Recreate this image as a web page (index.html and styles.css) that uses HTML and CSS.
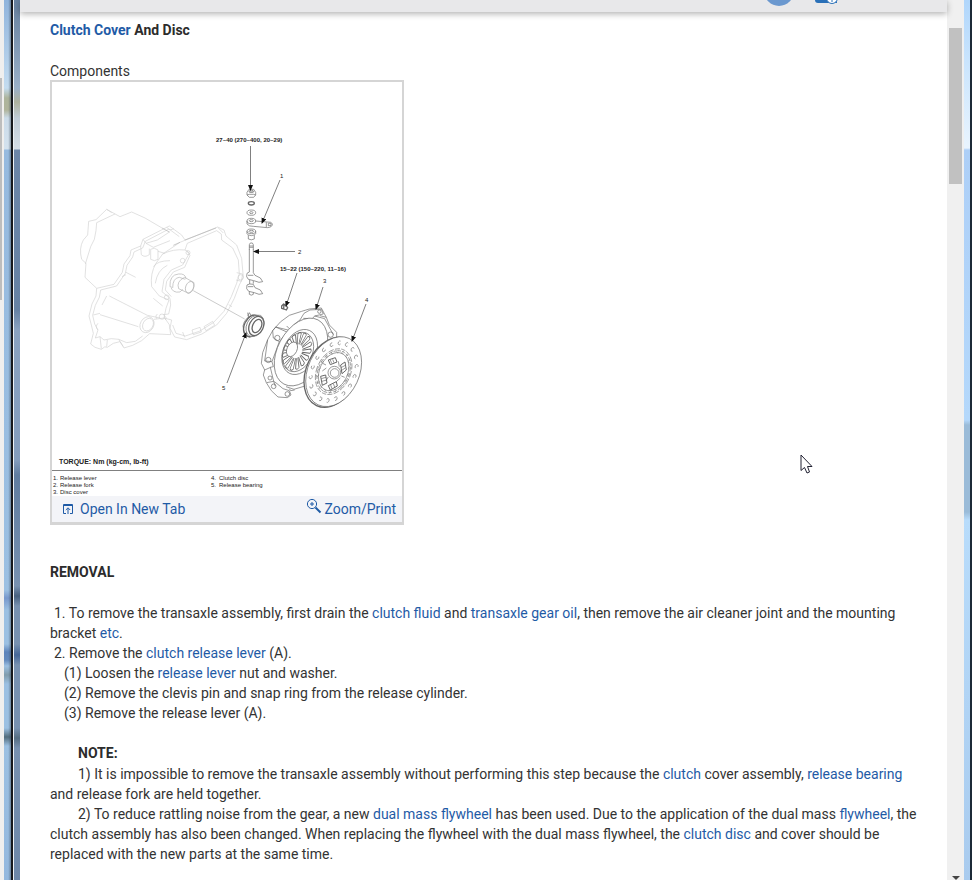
FILE: index.html
```html
<!DOCTYPE html>
<html lang="en">

<head>
    <meta charset="UTF-8">
    <meta name="viewport" content="width=device-width, initial-scale=1.0">
    <title>Clutch Cover And Disc</title>
    <link rel="stylesheet" href="styles.css">
</head>

<body>
    <div class="window">
        <div class="edge-left">
            <div class="back-window"><div class="back-thumb"></div></div>
            <div class="glass"></div>
            <div class="line-dark"></div>
            <div class="line-light"></div>
            <div class="glass-dark"></div>
        </div>

        <div class="page">
            <header class="topbar">
                <svg class="topbar-icons" viewBox="0 0 80 12" aria-hidden="true">
                    <circle cx="13" cy="-9" r="15" fill="#6b98cf" />
                    <path d="M49 0h22v3H52q-3 0-3-3z" fill="#2a70b8" />
                    <circle cx="66" cy="-2" r="5.500" fill="#fff" stroke="#2a70b8" />
                    <path d="M66 0v2" stroke="#2a70b8" />
                </svg>
            </header>

            <main class="content">
                <h1><a href="#clutch-cover">Clutch Cover</a> And Disc</h1>
                <p class="subtitle">Components</p>

                <figure class="diagram">
                    <svg class="drawing" viewBox="52 82 350 414" role="img" aria-label="Clutch cover and disc components">
                        <defs>
                            <marker id="arrow" markerWidth="7" markerHeight="6" refX="5" refY="2.500" orient="auto" markerUnits="userSpaceOnUse">
                                <path d="M0 0l6 2.500l-6 2.500z" fill="#111" stroke="none" />
                            </marker>
                            <path id="rivet" d="M5-96a6 6 0 1 0 2 9" />
                            <path id="finger" d="M-3-22L-7-56q7-8 14 0L3-22" />
                            <g id="fingers">
                                <use href="#finger" />
                                <use href="#finger" transform="rotate(24)" />
                                <use href="#finger" transform="rotate(48)" />
                                <use href="#finger" transform="rotate(72)" />
                                <use href="#finger" transform="rotate(96)" />
                                <use href="#finger" transform="rotate(120)" />
                                <use href="#finger" transform="rotate(144)" />
                                <use href="#finger" transform="rotate(168)" />
                                <use href="#finger" transform="rotate(192)" />
                                <use href="#finger" transform="rotate(216)" />
                                <use href="#finger" transform="rotate(240)" />
                                <use href="#finger" transform="rotate(264)" />
                                <use href="#finger" transform="rotate(288)" />
                                <use href="#finger" transform="rotate(312)" />
                                <use href="#finger" transform="rotate(336)" />
                            </g>
                            <g id="rivets">
                                <use href="#rivet" />
                                <use href="#rivet" transform="rotate(20)" />
                                <use href="#rivet" transform="rotate(40)" />
                                <use href="#rivet" transform="rotate(60)" />
                                <use href="#rivet" transform="rotate(80)" />
                                <use href="#rivet" transform="rotate(100)" />
                                <use href="#rivet" transform="rotate(120)" />
                                <use href="#rivet" transform="rotate(140)" />
                                <use href="#rivet" transform="rotate(160)" />
                                <use href="#rivet" transform="rotate(180)" />
                                <use href="#rivet" transform="rotate(200)" />
                                <use href="#rivet" transform="rotate(220)" />
                                <use href="#rivet" transform="rotate(240)" />
                                <use href="#rivet" transform="rotate(260)" />
                                <use href="#rivet" transform="rotate(280)" />
                                <use href="#rivet" transform="rotate(300)" />
                                <use href="#rivet" transform="rotate(320)" />
                                <use href="#rivet" transform="rotate(340)" />
                            </g>
                        </defs>

                        <!-- transaxle housing -->
                        <g class="faint" transform="translate(70 190) scale(.3333)">
                            <path d="M80 295L45 262L48 220L35 208Q26 175 40 150L53 135L56 94L78 89L110 58L150 80L185 66L225 84L276 114" />
                            <path d="M80 98L135 72M80 98L78 122Q76 150 62 170L46 222M110 58L125 68" />
                            <path d="M80 295L132 283L157 247L162 222L180 197L183 180L212 168L219 148L298 108L335 135L345 150" />
                            <path d="M92 300L140 288L166 250L171 226L188 201L192 186L218 174L226 154L297 117L328 140" />
                            <path d="M219 148L228 160L262 150L300 125M212 168L214 194Q224 204 238 194L238 176M242 178Q252 170 264 180L264 208Q254 216 242 208zM264 184L284 190" />
                            <path d="M228 160L250 172L300 152M290 112L300 120L312 116" />
                            <path d="M80 295L78 318L66 342L57 378L64 405L70 430L62 462Q72 474 94 478Q106 466 112 472L130 460L150 455L162 474L188 466L215 452L239 431L302 434" />
                            <path d="M92 300L88 322L76 346L68 376L74 402L84 420L76 444L90 440L102 450L124 446L146 448L170 458L196 454L218 438" />
                            <path d="M70 375L90 370M110 318L96 345M84 400Q74 410 84 420M146 448L160 470M90 440L94 476M112 450L110 470" />
                            <path d="M118 318L232 376L270 384M90 374L205 410M168 247L197 262M156 260L168 254M250 325L278 348" />
                            <ellipse cx="231" cy="404" rx="20" ry="25" transform="rotate(30 231 404)" />
                            <ellipse cx="234" cy="404" rx="15" ry="20" transform="rotate(30 234 404)" />
                            <path d="M252 388L284 384L298 404L302 434M262 372Q254 378 260 386M284 378q8 5 2 12" />
                            <path d="M278 192L330 157L443 111L462 120L468 138L500 165L515 205L520 262L508 285L493 325L470 370L440 405L396 432L350 449L314 441L300 415L305 390L282 384L288 355L297 330L268 318L245 290Q240 250 258 220L278 192" />
                            <path d="M345 180L352 160L440 122L454 132L455 150L488 174L505 210L508 252L500 280L484 320L462 364L430 398L388 424L346 438L318 430L308 405" />
                            <path d="M278 192Q310 176 345 180L358 190L338 225L304 240L282 268L276 305L300 325L302 345L296 372L280 374" />
                            <path d="M350 180L360 196L344 232L310 246L290 274L286 300L304 320M250 230Q262 212 300 212M256 280Q262 240 292 226" />
                            <path d="M338 426l6 16M366 420l4 14l24-8l-4-14zM402 410l6 12l26-16l-6-12zM476 344l10 6M444 113l16 16M500 248l18 4l-4 22l-16-4" />
                            <circle cx="338" cy="212" r="7" /><circle cx="290" cy="322" r="7" /><circle cx="354" cy="188" r="6" /><circle cx="276" cy="380" r="8" /><circle cx="512" cy="262" r="8" />
                        </g>
                        <g class="soft" transform="translate(70 190) scale(.3333)">
                            <path d="M276 114L298 126M345 150L438 114M330 157L310 166" />
                            <path d="M300 290Q298 254 326 252Q346 250 348 266M308 294Q308 264 328 262L346 268M302 288Q306 310 330 306L338 298" />
                            <path d="M344 262L372 278Q374 300 356 310L326 296Q318 274 344 262z" />
                            <ellipse cx="359" cy="292" rx="12" ry="18" transform="rotate(20 359 292)" />
                            <path d="M370 302L524 387" />
                        </g>

                        <!-- release lever and fork -->
                        <g class="ink" transform="translate(200 120) scale(.3333)">
                            <path d="M141 217l6-9h14l6 9v8l-6 7h-13l-7-7zM147 216h14M141 225l7-2h13l6 2" />
                            <ellipse cx="154" cy="214" rx="7" ry="3" />
                            <ellipse cx="154" cy="250" rx="9" ry="5" stroke-width="4" />
                            <ellipse cx="154" cy="278" rx="13" ry="8" /><ellipse cx="154" cy="278" rx="5" ry="3" />
                            <ellipse cx="154" cy="303" rx="13" ry="8" /><ellipse cx="154" cy="302" rx="6" ry="3" />
                            <path d="M141 303v9q6 8 19 7l42 4q16-1 15-12q-3-6-16-5l-34-3M199 307v14M205 310h8v7h-8z" />
                            <ellipse cx="154" cy="334" rx="13" ry="7" /><ellipse cx="154" cy="334" rx="7" ry="3" />
                            <path d="M141 334v7l4 4v12q9 5 18 0v-12l4-4v-7M146 345q8 4 16 0" />
                            <path d="M148 390v-16l3-5h6l3 5v16M148 382h12M148 378h12M148 388L148 456M160 388L160 458" />
                            <path d="M148 456l-7 4l-1 10l5 8l16 4l16 5l11-2l-7-11l-16-8l-5-8M144 466h16M149 480v12M160 483v8" />
                            <path d="M149 492l-8 3l-1 11l6 8l17 4l14 5l11-2l-7-11l-16-7l-5-10l-11-1M144 500h16M148 515v8q6 5 12 0v-5" />
                        </g>

                        <!-- bearing, cover and disc -->
                        <g class="ink" transform="translate(210 270) scale(.3333)">
                            <path d="M114 138l4-10l6 9M113 128l3 16M103 190L99 168Q104 144 126 135L151 136Q163 143 162 162Q157 184 140 197L118 201z" fill="#fff" />
                            <ellipse cx="126" cy="168" rx="23" ry="34" transform="rotate(25 126 168)" stroke-width="4" />
                            <ellipse cx="133" cy="168" rx="23" ry="33" transform="rotate(25 133 168)" fill="#fff" />
                            <ellipse cx="139" cy="168" rx="21" ry="30" transform="rotate(25 139 168)" stroke-width="4" fill="#fff" />
                            <ellipse cx="141" cy="168" rx="13" ry="21" transform="rotate(25 141 168)" stroke-width="4" />
                            <path d="M215 108l6-6l7 5l5 6l-4 7l-7-3l-7-2zM222 104l-1 12" stroke-width="4" />

                            <path d="M275 124L238 136Q210 152 188 182L173 209L158 248L154 280L164 300L160 315L169 338L184 362L204 381L232 383L243 375L238 362L219 356L201 341M275 124L298 117L334 114L349 142L358 165L380 187L380 204" fill="#fff" />
                            <path d="M188 182L197 171L235 188L221 199L208 215L190 204zM197 171L238 181Q252 160 270 150L282 130M208 215L186 275L164 273L173 209M186 275L190 290L181 292L191 334L201 341M164 300L182 292M170 338L191 334L196 349M282 130L300 120L334 118L340 132L314 138L307 146L280 145M314 138L344 146L370 194M349 142L330 137M240 178l-10-10M246 190l-9-9" />
                            <circle cx="202" cy="204" r="8" /><circle cx="175" cy="270" r="8" /><circle cx="191" cy="349" r="7" /><circle cx="232" cy="372" r="7" /><circle cx="362" cy="194" r="8" /><circle cx="328" cy="125" r="5" /><circle cx="180" cy="324" r="6" />
                            <ellipse cx="273" cy="246" rx="70" ry="109" transform="rotate(28 273 246)" fill="#fff" />
                            <path d="M228 350l24 8l30-9M238 356l4 6l12-2" />
                            <ellipse cx="269" cy="246" rx="49" ry="71" transform="rotate(25 269 246)" />
                            <ellipse cx="264" cy="246" rx="43" ry="62" transform="rotate(25 264 246)" />
                            <g class="spring" transform="translate(261 244) rotate(25) scale(.67 1)">
                                <use href="#fingers" />
                            </g>
                            <ellipse cx="246" cy="238" rx="15" ry="23" transform="rotate(25 246 238)" fill="#fff" />

                            <ellipse cx="366" cy="307" rx="77" ry="110" transform="rotate(25 366 307)" fill="#fff" stroke-width="4" />
                            <ellipse cx="371" cy="305" rx="77" ry="110" transform="rotate(25 371 305)" fill="#fff" />
                            <g transform="translate(371 305) rotate(25) scale(.7 1)">
                                <use href="#rivets" />
                                <circle r="72" stroke-dasharray="20 5" />
                                <circle r="66" stroke-dasharray="12 6" />
                                <circle r="60" />
                                <use href="#rivets" transform="scale(.7)" />
                            </g>
                            <g fill="#fff" stroke-width="3">
                                <path d="M355 270l21-7l5 13l-20 8zM392 285l13-9l4 24l-13 11zM355 347l24-12l3 13l-21 12zM332 319l15-4l4 24l-14 7z" />
                                <path d="M361 270l4 10M368 268l4 10M393 293l13-7M394 302l13-9M362 345l4 11M370 341l4 10M334 326l14-4M336 334l14-4" stroke-width="2" />
                            </g>
                            <circle cx="373" cy="308" r="19" fill="#fff" /><circle cx="374" cy="309" r="13" />
                            <path d="M349 294l-12 9M355 321l-7 11M391 324l-12 11M388 290l-3-16M338 280l10 5M404 322l-10-4" />
                        </g>

                        <g class="leader">
                            <path d="M250.500 146V190" marker-end="url(#arrow)" />
                            <path d="M280 180L262 223" marker-end="url(#arrow)" />
                            <path d="M295 251.500H254" marker-end="url(#arrow)" />
                            <path d="M297 273L286 306" marker-end="url(#arrow)" />
                            <path d="M323 287L316 309" marker-end="url(#arrow)" />
                            <path d="M366 304L352 341" marker-end="url(#arrow)" />
                            <path d="M227 383L246 333" marker-end="url(#arrow)" />
                            <path d="M52 470.500H402" />
                        </g>

                        <g class="label">
                            <text class="strong" x="216" y="142">27~40 (270~400, 20~29)</text>
                            <text class="strong" x="280" y="271">15~22 (150~220, 11~16)</text>
                            <text x="280" y="178">1</text>
                            <text x="298" y="254">2</text>
                            <text x="323" y="283">3</text>
                            <text x="365" y="302">4</text>
                            <text x="222" y="390">5</text>
                            <text class="torque" x="59" y="464">TORQUE: Nm (kg-cm, lb-ft)</text>
                            <text x="53" y="480">1.</text><text x="60" y="480">Release lever</text>
                            <text x="53" y="487">2.</text><text x="60" y="487">Release fork</text>
                            <text x="53" y="494">3.</text><text x="60" y="494">Disc cover</text>
                            <text x="211" y="480">4.</text><text x="219" y="480">Clutch disc</text>
                            <text x="211" y="487">5.</text><text x="219" y="487">Release bearing</text>
                        </g>
                    </svg>
                    <figcaption class="toolbar">
                        <a href="#open">
                            <svg class="icon-tab" viewBox="0 0 12 12" aria-hidden="true">
                                <path d="M4 10.500H1.500V1.500H10.500V10.500H8M1 2.500H11M6 11V5.500M3.800 7L6 4.800L8.200 7" />
                            </svg>
                            Open In New Tab
                        </a>
                        <a href="#zoom">
                            <svg class="icon-zoom" viewBox="0 0 16 16" aria-hidden="true">
                                <circle cx="6" cy="6" r="4.600" />
                                <path class="handle" d="M9.500 9.500L14.500 14.500" />
                                <path d="M6 4V8M4 6H8" />
                            </svg>
                            Zoom/Print
                        </a>
                    </figcaption>
                </figure>

                <h2>REMOVAL</h2>
                <p class="step">1. To remove the transaxle assembly, first drain the <a href="#fluid">clutch fluid</a> and <a href="#oil">transaxle gear oil</a>, then remove the air cleaner joint and the mounting bracket <a href="#etc">etc</a>.</p>
                <p class="step">2. Remove the <a href="#release-lever">clutch release lever</a> (A).</p>
                <p class="substep">(1) Loosen the <a href="#release-lever">release lever</a> nut and washer.</p>
                <p class="substep">(2) Remove the clevis pin and snap ring from the release cylinder.</p>
                <p class="substep">(3) Remove the release lever (A).</p>

                <h3>NOTE:</h3>
                <p class="note">1) It is impossible to remove the transaxle assembly without performing this step because the <a href="#clutch">clutch</a> cover assembly, <a href="#bearing">release bearing</a> and release fork are held together.</p>
                <p class="note">2) To reduce rattling noise from the gear, a new <a href="#flywheel">dual mass flywheel</a> has been used. Due to the application of the dual mass <a href="#flywheel">flywheel</a>, the clutch assembly has also been changed. When replacing the flywheel with the dual mass flywheel, the <a href="#disc">clutch disc</a> and cover should be replaced with the new parts at the same time.</p>
            </main>
        </div>

        <div class="scrollbar">
            <div class="thumb"></div>
            <div class="arrow-down"></div>
        </div>
        <div class="edge-right"></div>
    </div>

    <svg class="cursor" viewBox="0 0 13 20" aria-hidden="true">
        <path d="M1 1V16.500L4.500 13.500L7 19L9.500 18L7.500 12.500H12z" fill="#fff" stroke="#223" />
    </svg>
</body>

</html>
```
FILE: styles.css
```css
body {
    margin: 0;
    font-family: Roboto, "Noto Sans", sans-serif;
    font-size: 14px;
    line-height: 20px;
    color: #333;
    background: white;
}

a {
    color: #1f5ba6;
    text-decoration: none;
}

.window {
    display: flex;
    height: 100vh;
    overflow: hidden;
}

.edge-left {
    display: flex;
    flex: none;
}

.back-window {
    width: 4px;
    padding-top: 78px;
    box-sizing: border-box;
    background: #f0efee;
}

.back-thumb {
    width: 2px;
    height: 222px;
    background: #bdbdbd;
}

.glass {
    width: 7px;
    background:
        linear-gradient(90deg, transparent 60%, rgba(60, 75, 90, 0.5)),
        linear-gradient(#90b4dc 0, #c4dcf0 88px, #adb49c 98px, #b0b49c 110px, #cbdbe9 118px, #d4e2ee 149px, #96badf 150px, #9cc0e2 590px, #7898cc 598px, #9cc0e2 610px, #9cc0e2 644px, #5d83ba 652px, #648abd 660px, #9cc0e2 666px, #809cac 675px, #9cc0e2 684px, #9cc0e2 728px, #526c7c 737px, #9cc0e2 746px, #94b8de 880px);
}

.line-dark {
    width: 2px;
    background: #16181c;
}

.line-light {
    width: 1px;
    background: #eef2f5;
}

.glass-dark {
    width: 6px;
    background: linear-gradient(#66809e 0, #9ab0c8 88px, #aeb29e 102px, #c0ccd6 118px, #d4dde6 149px, #6c86a8 150px, #6682a4 310px, #8aa2c0 330px, #849dbd 460px, #607da0 475px, #7891b0 586px, #48617f 596px, #7891b0 606px, #7891b0 644px, #466798 655px, #7891b0 665px, #7891b0 728px, #566e82 738px, #7891b0 748px, #6d87a8 880px);
}

.page {
    flex: 1;
    min-width: 0;
}

.topbar {
    position: relative;
    z-index: 1;
    display: flex;
    justify-content: flex-end;
    height: 12px;
    padding-right: 101px;
    background: #e8e8ea;
    box-shadow: 0 2px 6px rgba(0, 0, 0, 0.3);
}

.topbar-icons {
    width: 80px;
    height: 12px;
}

.content {
    padding: 8px 20px 0 30px;
}

h1,
h2,
h3,
p {
    margin: 0;
    font-size: 14px;
    line-height: 20px;
}

h1,
h2,
h3 {
    font-weight: bold;
    color: #2c2c2c;
}

.subtitle {
    margin-top: 22px;
    line-height: 18px;
}

.diagram {
    width: 350px;
    margin: 0 0 37px;
    border: 2px solid #d5d5d5;
    border-width: 2px 2px 3px;
}

.drawing {
    display: block;
    width: 100%;
    font-family: "Liberation Sans", Arial, sans-serif;
}

.faint,
.soft,
.ink,
.leader {
    fill: none;
    stroke-linejoin: round;
}

.faint {
    stroke: #d2d2d2;
    stroke-width: 2;
}

.soft {
    stroke: #b0b0b0;
    stroke-width: 2;
}

.ink {
    stroke: #666;
    stroke-width: 2;
}

.spring {
    stroke-width: 3;
}

.leader {
    stroke: #808080;
    stroke-width: 1;
}

.label {
    font-size: 6px;
    fill: #222;
}

.strong {
    font-weight: bold;
}

.torque {
    font-size: 7px;
    font-weight: bold;
}

.toolbar {
    display: flex;
    justify-content: space-between;
    padding: 2px 6px 2px 10px;
    background: #f3f4f8;
}

.toolbar a {
    display: flex;
    align-items: center;
    gap: 6px;
}

.toolbar a + a {
    gap: 2px;
}

.icon-tab,
.icon-zoom {
    fill: none;
    stroke: #1f5ba6;
}

.icon-tab {
    width: 12px;
    height: 12px;
}

.icon-zoom {
    width: 16px;
    height: 16px;
    margin-bottom: 6px;
}

.handle {
    stroke-width: 2;
}

h2 {
    margin-bottom: 21px;
}

.step {
    text-indent: 4px;
}

.substep {
    text-indent: 14px;
}

h3 {
    margin: 20px 0 1px;
    text-indent: 28px;
}

.note {
    text-indent: 28px;
}

.scrollbar {
    display: flex;
    flex: none;
    flex-direction: column;
    justify-content: space-between;
    align-items: center;
    width: 17px;
    padding-top: 28px;
    box-sizing: border-box;
    background: #f0f0f0;
}

.thumb {
    width: 13px;
    height: 156px;
    background: #c1c1c1;
}

.arrow-down {
    border: 4px solid transparent;
    border-top-color: #444;
    border-bottom: 0;
}

.edge-right {
    flex: none;
    width: 6px;
    border-right: 2px solid #1c2a38;
    background: linear-gradient(#b0d6fb 0, #c9e4fd 60px, #e9f4fe 148px, #adcff7 150px, #b4d8fb 420px, #9abbd8 425px, #9abbd8 512px, #b8dcfb 520px, #a9cbee 880px);
}

/* mouse pointer */
.cursor {
    position: absolute;
    left: 800px;
    top: 454px;
    width: 13px;
    height: 20px;
}
```
